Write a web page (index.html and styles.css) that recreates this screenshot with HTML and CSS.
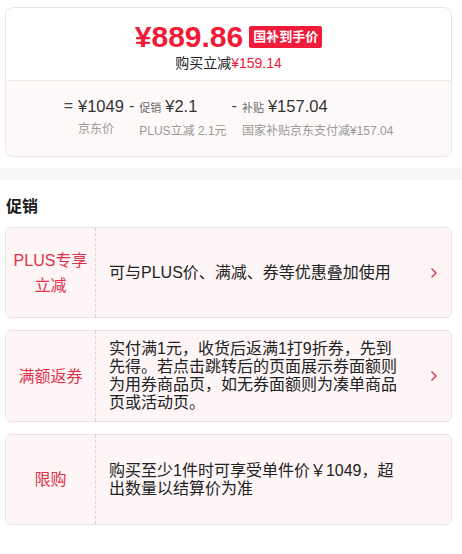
FILE: index.html
```html
<!DOCTYPE html>
<html lang="zh-CN">
<head>
    <meta charset="UTF-8">
    <meta name="viewport" content="width=device-width, initial-scale=1.0">
    <title>价格与促销</title>
    <link rel="stylesheet" href="styles.css">
</head>
<body>
<div class="top">
    <div class="price-card">
        <div class="price-top">
            <div class="final">
                <span class="final-price">¥889.86</span>
                <span class="badge">国补到手价</span>
            </div>
            <div class="saving">购买立减<span class="red">¥159.14</span></div>
        </div>
        <div class="price-bottom">
            <div class="formula">
                <div class="term">
                    <span class="op">=</span>
                    <div class="stack">
                        <div class="val">¥1049</div>
                        <div class="label">京东价</div>
                    </div>
                </div>
                <div class="term">
                    <span class="op">-</span>
                    <div class="stack">
                        <div class="val"><span class="tag">促销</span>¥2.1</div>
                        <div class="label">PLUS立减 2.1元</div>
                    </div>
                </div>
                <div class="term">
                    <span class="op">-</span>
                    <div class="stack">
                        <div class="val"><span class="tag">补贴</span>¥157.04</div>
                        <div class="label">国家补贴京东支付减¥157.04</div>
                    </div>
                </div>
            </div>
        </div>
    </div>
</div>

<div class="divider"></div>

<div class="promo">
    <h3 class="promo-title">促销</h3>

    <div class="promo-card">
        <div class="promo-name">PLUS专享<br>立减</div>
        <div class="promo-text">可与PLUS价、满减、券等优惠叠加使用</div>
        <svg class="arrow" width="8" height="12" viewBox="0 0 8 12"><path d="M1.5 1.5 L6 6 L1.5 10.5" fill="none" stroke="#e1314a" stroke-width="1.4"/></svg>
    </div>

    <div class="promo-card">
        <div class="promo-name">满额返券</div>
        <div class="promo-text">实付满1元，收货后返满1打9折券，先到先得。若点击跳转后的页面展示券面额则为用券商品页，如无券面额则为凑单商品页或活动页。</div>
        <svg class="arrow" width="8" height="12" viewBox="0 0 8 12"><path d="M1.5 1.5 L6 6 L1.5 10.5" fill="none" stroke="#e1314a" stroke-width="1.4"/></svg>
    </div>

    <div class="promo-card">
        <div class="promo-name">限购</div>
        <div class="promo-text">购买至少1件时可享受单件价￥1049，超出数量以结算价为准</div>
    </div>
</div>
</body>
</html>
```

FILE: styles.css
```css
body {
    margin: 0;
    font-family: "Liberation Sans", "Noto Sans CJK SC", sans-serif;
    color: #333;
    background-color: #fff;
}
.red {
    color: #f01b38;
}
.top {
    padding: 7px 10px 11px 5px;
}
.price-card {
    border: 1px solid #ebe7e7;
    border-radius: 8px;
    overflow: hidden;
}
.price-top {
    height: 61px;
    padding-top: 11px;
    display: flex;
    flex-direction: column;
    align-items: center;
}
.final {
    display: flex;
    align-items: center;
    height: 36px;
}
.final-price {
    font-size: 30px;
    font-weight: bold;
    color: #f01b38;
    line-height: 36px;
}
.badge {
    margin-left: 6px;
    background-color: #f01b38;
    color: #fff;
    font-size: 13px;
    font-weight: bold;
    line-height: 22px;
    padding: 0 4px;
    border-radius: 2px;
}
.saving {
    font-size: 14px;
    line-height: 16px;
    color: #222;
}
.price-bottom {
    border-top: 1px solid #f3ebea;
    background-color: #fdf9f8;
    height: 63px;
    padding-top: 12px;
}
.formula {
    display: flex;
    justify-content: center;
    gap: 5px;
}
.term {
    display: flex;
}
.op {
    font-size: 16px;
    line-height: 26px;
    margin-right: 5px;
    color: #444;
}
.val {
    font-size: 16.5px;
    line-height: 26px;
    color: #333;
}
.tag {
    font-size: 11px;
    color: #666;
    margin-right: 4px;
}
.label {
    font-size: 12px;
    line-height: 20px;
    color: #999;
}
.divider {
    height: 12px;
    background-color: #f6f7f9;
}
.promo {
    padding: 15px 10px 20px 5px;
}
.promo-title {
    margin: 0 0 8px 1px;
    font-size: 16px;
    line-height: 24px;
    font-weight: bold;
    color: #1a1a1a;
}
.promo-card {
    display: flex;
    align-items: stretch;
    min-height: 89px;
    border: 1px solid #f0e2e4;
    border-radius: 6px;
    background-color: #fdf5f6;
    margin-bottom: 12px;
}
.promo-name {
    width: 89px;
    flex-shrink: 0;
    border-right: 1px dashed #e6cfd3;
    display: flex;
    align-items: center;
    justify-content: center;
    text-align: center;
    font-size: 16px;
    line-height: 25px;
    color: #e1314a;
}
.promo-text {
    flex: 1;
    align-self: center;
    padding: 9px 0 9px 13px;
    max-width: 290px;
    font-size: 16px;
    line-height: 18px;
    color: #222;
}
.arrow {
    align-self: center;
    margin-left: auto;
    margin-right: 13px;
}
```
